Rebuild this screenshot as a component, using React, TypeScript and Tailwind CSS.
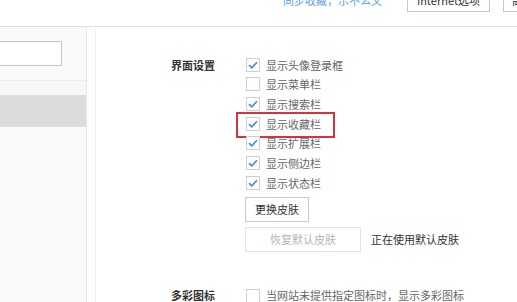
import React from "react";

const font = { fontFamily: '"Noto Sans CJK SC", "Noto Sans", sans-serif' };

function Check({ checked }: { checked?: boolean }) {
  return (
    <span className="flex h-[14px] w-[14px] shrink-0 items-center justify-center border border-[#cfcfcf] bg-white">
      {checked && (
        <svg width="10" height="8" viewBox="0 0 10 8">
          <path d="M1 4.2 L3.8 6.8 L9 1.2" fill="none" stroke="#3d8ee0" strokeWidth="1.6" />
        </svg>
      )}
    </span>
  );
}

const rows: { label: string; checked: boolean }[] = [
  { label: "显示头像登录框", checked: true },
  { label: "显示菜单栏", checked: false },
  { label: "显示搜索栏", checked: true },
  { label: "显示收藏栏", checked: true },
  { label: "显示扩展栏", checked: true },
  { label: "显示侧边栏", checked: true },
  { label: "显示状态栏", checked: true },
];

export default function App() {
  return (
    <div className="relative h-[302px] w-[517px] overflow-hidden bg-white text-[11px]" style={font}>
      {/* top bar */}
      <div className="flex h-[27px] items-start border-b border-[#e2e2e2]">
        <div className="-mt-[12px] flex h-[24px] w-full items-center whitespace-nowrap">
          <span className="ml-[283px] text-[#5aa0e6]">同步收藏，示不么又</span>
          <button className="ml-[25px] flex h-[24px] w-[83px] shrink-0 items-center justify-center border border-[#c8c8c8] bg-white text-[#333]">
            Internet选项
          </button>
          <button className="ml-[13px] flex h-[24px] w-[40px] shrink-0 items-center border border-[#c8c8c8] bg-white pl-2 text-[#333]">
            高级
          </button>
        </div>
      </div>

      <div className="flex h-[275px]">
        {/* sidebar */}
        <div className="w-[87px] shrink-0 border-r border-[#e6e6e6] bg-[#fafafa]">
          <div className="mt-[14px] h-[25px] w-[62px] border border-l-0 border-[#c6c6c6] bg-white"></div>
          <div className="mt-[14px] h-[15px] border-t border-[#ebebeb] bg-[#f7f7f7]"></div>
          <div className="h-[32px] bg-[#dcdcdc]"></div>
        </div>
        <div className="w-[9px] shrink-0 border-r border-[#f1f1f1]"></div>

        {/* main */}
        <div className="flex flex-col pl-[75px] pt-[28px]">
          <div className="flex">
            <div className="flex h-[19.67px] w-[75px] shrink-0 items-center font-bold text-[#333]">界面设置</div>
            <div className="flex flex-col">
              {rows.map((r, i) => (
                <div key={r.label} className="relative flex h-[19.67px] items-center gap-[6px] text-[#666]">
                  <Check checked={r.checked} />
                  <span>{r.label}</span>
                  {i === 3 && (
                    <div className="absolute -left-[10px] -top-[2px] h-[26px] w-[99px] border-2 border-[#d6343c]"></div>
                  )}
                </div>
              ))}
              <button className="-ml-[1px] mt-[4px] flex h-[25px] w-[64px] items-center justify-center border border-[#c8c8c8] bg-white text-[#333]">
                更换皮肤
              </button>
              <div className="-ml-[1px] mt-[5px] flex items-center">
                <button className="flex h-[25px] w-[116px] items-center justify-center border border-[#e3e3e3] bg-white text-[#b5b5b5]">
                  恢复默认皮肤
                </button>
                <span className="ml-[10px] text-[#333]">正在使用默认皮肤</span>
              </div>
            </div>
          </div>
          <div className="mt-[36px] flex h-[16px] items-center">
            <div className="w-[75px] shrink-0 font-bold text-[#333]">多彩图标</div>
            <div className="flex items-center gap-[6px] text-[#666]">
              <Check />
              <span>当网站未提供指定图标时，显示多彩图标</span>
            </div>
          </div>
        </div>
      </div>
    </div>
  );
}
